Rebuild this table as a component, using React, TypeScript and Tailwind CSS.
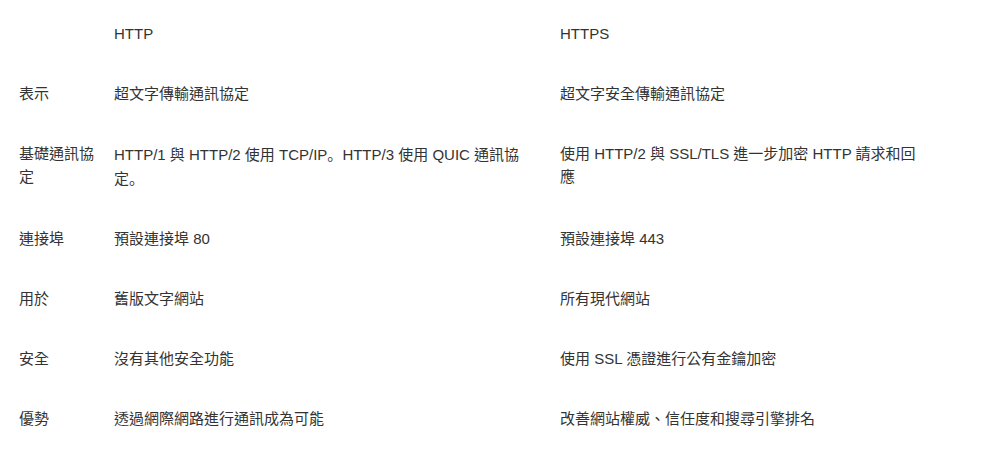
import React from "react";

const rows: [string, string, string][] = [
  ["", "HTTP", "HTTPS"],
  ["表示", "超文字傳輸通訊協定", "超文字安全傳輸通訊協定"],
  [
    "基礎通訊協定",
    "HTTP/1 與 HTTP/2 使用 TCP/IP。HTTP/3 使用 QUIC 通訊協定。",
    "使用 HTTP/2 與 SSL/TLS 進一步加密 HTTP 請求和回應",
  ],
  ["連接埠", "預設連接埠 80", "預設連接埠 443"],
  ["用於", "舊版文字網站", "所有現代網站"],
  ["安全", "沒有其他安全功能", "使用 SSL 憑證進行公有金鑰加密"],
  ["優勢", "透過網際網路進行通訊成為可能", "改善網站權威、信任度和搜尋引擎排名"],
];

function Txt({ s }: { s: string }) {
  const parts = s.split("。");
  return (
    <>
      {parts.map((p, i) => (
        <React.Fragment key={i}>
          {p}
          {i < parts.length - 1 && (
            <span style={{ fontFamily: '"Noto Sans CJK JP", sans-serif' }}>。</span>
          )}
        </React.Fragment>
      ))}
    </>
  );
}

export default function App() {
  return (
    <div
      className="w-[983px] h-[463px] bg-white text-[#333] text-[15px] leading-[23px] pt-[3px] pl-[19px] overflow-hidden"
      style={{ fontFamily: '"Liberation Sans", Arial, "Noto Sans CJK TC", sans-serif' }}
    >
      {rows.map((r, i) => (
        <div key={i} className="grid grid-cols-[95px_446px_380px]">
          <div className="py-[18.5px] pr-[10px]">
            <Txt s={r[0]} />
          </div>
          <div className="py-[18.5px] pr-[20px]">
            <Txt s={r[1]} />
          </div>
          <div className="py-[18.5px] pr-[10px]">
            <Txt s={r[2]} />
          </div>
        </div>
      ))}
    </div>
  );
}
